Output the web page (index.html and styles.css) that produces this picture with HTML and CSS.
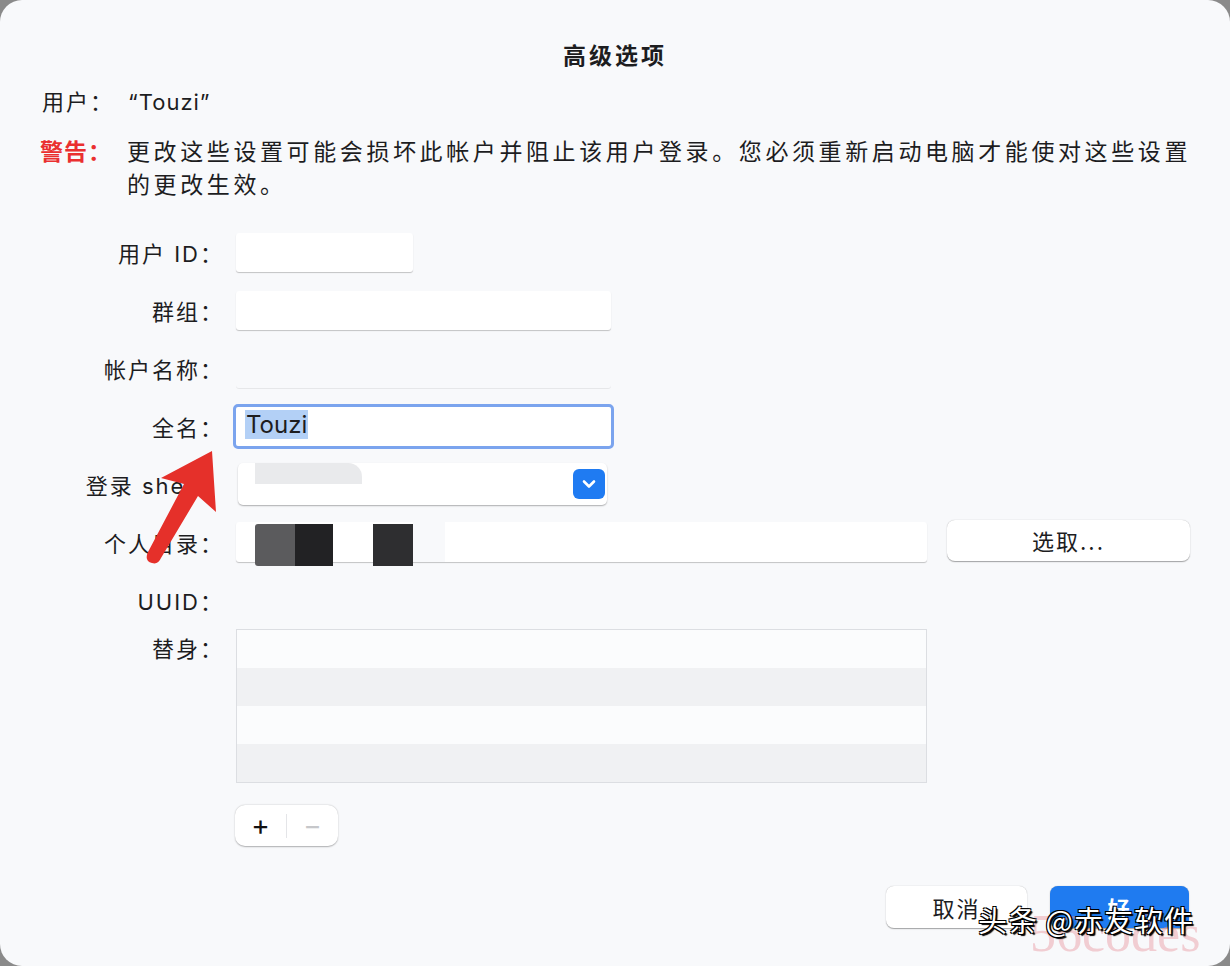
FILE: index.html
```html
<!DOCTYPE html>
<html lang="zh-CN">
<head>
  <meta charset="UTF-8" />
  <meta name="viewport" content="width=device-width, initial-scale=1" />
  <title>高级选项</title>
  <link rel="stylesheet" href="styles.css">
</head>
<body>
  <div class="dialog">
    <h1 class="title">高级选项</h1>
    <p class="user">用户：<span class="user-name">“Touzi”</span></p>
    <div class="warning">
      <span class="warn-label">警告：</span>
      <p class="warn-text">更改这些设置可能会损坏此帐户并阻止该用户登录。您必须重新启动电脑才能使对这些设置的更改生效。</p>
    </div>

    <div class="form">
      <div class="row">
        <label>用户 ID：</label>
        <div class="field field-short"></div>
      </div>
      <div class="row">
        <label>群组：</label>
        <div class="field field-mid"></div>
      </div>
      <div class="row">
        <label>帐户名称：</label>
        <div class="field field-mid field-flat"></div>
      </div>
      <div class="row">
        <label>全名：</label>
        <div class="field field-focus"><span class="sel">Touzi</span></div>
      </div>
      <div class="row">
        <label>登录 shell：</label>
        <div class="popup">
          <span class="blur-bar"></span>
          <span class="chevron">
            <svg width="14" height="10" viewBox="0 0 14 10"><path d="M2 2.5 L7 7.5 L12 2.5" fill="none" stroke="#fff" stroke-width="2.6" stroke-linecap="round" stroke-linejoin="round"/></svg>
          </span>
        </div>
      </div>
      <div class="row">
        <label>个人目录：</label>
        <div class="field field-wide">
          <span class="mask m1"></span><span class="mask m2"></span><span class="gap"></span><span class="mask m3"></span><span class="gap2"></span>
        </div>
        <button class="btn choose">选取...</button>
      </div>
      <div class="row">
        <label>UUID：</label>
      </div>
      <div class="row row-top">
        <label>替身：</label>
        <div class="alias-list">
          <div class="alias-row"></div>
          <div class="alias-row odd"></div>
          <div class="alias-row"></div>
          <div class="alias-row odd"></div>
        </div>
      </div>
      <div class="row-tools">
        <div class="segmented">
          <span class="seg plus">+</span>
          <span class="seg-sep"></span>
          <span class="seg minus">−</span>
        </div>
      </div>
    </div>

    <div class="actions">
      <button class="btn cancel">取消</button>
      <button class="btn ok">好</button>
    </div>

    <svg class="arrow" width="84" height="125" viewBox="0 0 84 125">
      <path d="M78 1 L27 28 L50 34 L14 102 Q10 111 18 113 Q24 115 27 108 L64 46 L82 62 Z" fill="#e5302a"/>
    </svg>

    <div class="wm-logo">56codes</div>
    <div class="wm-text">头条 @赤友软件</div>
  </div>
</body>
</html>
```

FILE: styles.css
```css
html {
  background: #8a8a8a;
}
body {
  margin: 0;
  font-family: Inter, "Noto Sans CJK SC", sans-serif;
  color: #1d1d1f;
}
.dialog {
  position: relative;
  width: 1230px;
  height: 966px;
  box-sizing: border-box;
  background: #f8f9fb;
  border-radius: 22px;
  padding: 36px 40px 0 40px;
  overflow: hidden;
}
.title {
  margin: 0;
  text-align: center;
  font-size: 23px;
  font-weight: 700;
  letter-spacing: 3px;
  line-height: 40px;
}
.user {
  margin: 10px 0 0 2px;
  font-size: 22px;
  line-height: 32px;
  letter-spacing: 2px;
}
.user-name {
  margin-left: 14px;
  letter-spacing: 1px;
}
.warning {
  display: flex;
  margin-top: 18px;
  margin-right: -20px;
  font-size: 23px;
  line-height: 33px;
}
.warn-label {
  flex: none;
  width: 87px;
  color: #ea2f2f;
  font-weight: 700;
  letter-spacing: 1px;
}
.warn-text {
  margin: 0;
  letter-spacing: 3.6px;
}
.form {
  margin-top: 21px;
  margin-left: -40px;
}
.row {
  display: flex;
  align-items: center;
  height: 58px;
}
.row label {
  flex: none;
  width: 224px;
  text-align: right;
  font-size: 22px;
  letter-spacing: 2px;
  margin-right: 12px;
}
.row-top {
  align-items: flex-start;
  height: auto;
}
.row-top label {
  margin-top: 2px;
}
.field {
  box-sizing: border-box;
  height: 39px;
  background: #fff;
  border-radius: 3px;
  box-shadow: 0 1px 1px rgba(0, 0, 0, 0.22);
}
.field-short {
  width: 177px;
}
.field-mid {
  width: 375px;
}
.field-flat {
  background: transparent;
  box-shadow: 0 1px 0 rgba(0, 0, 0, 0.07);
}
.field-focus {
  width: 381px;
  height: 45px;
  margin-left: -3px;
  border: 3px solid #7ba4ee;
  border-radius: 5px;
  box-shadow: none;
  padding: 3px 0 0 9px;
  font-size: 24px;
  line-height: 30px;
}
.sel {
  background: #b3d0f6;
  padding: 0 1px;
}
.popup {
  position: relative;
  box-sizing: border-box;
  width: 369px;
  height: 42px;
  margin-left: 2px;
  background: #fff;
  border-radius: 5px;
  box-shadow: 0 1px 1.5px rgba(0, 0, 0, 0.3);
  display: flex;
  align-items: center;
  justify-content: flex-end;
  padding-right: 2px;
}
.blur-bar {
  position: absolute;
  left: 17px;
  top: 0;
  width: 107px;
  height: 21px;
  background: #e9eaec;
  border-radius: 0 14px 0 0;
}
.chevron {
  width: 32px;
  height: 30px;
  border-radius: 6px;
  background: #1f7bf2;
  display: flex;
  align-items: center;
  justify-content: center;
}
.field-wide {
  width: 691px;
  height: 40px;
  display: flex;
  align-items: stretch;
  padding-left: 19px;
}
.mask {
  height: 42px;
  margin-top: 2px;
}
.m1 {
  width: 40px;
  background: #5b5b5d;
  border-radius: 3px 0 0 3px;
}
.m2 {
  width: 38px;
  background: #222224;
}
.gap {
  width: 40px;
  background: #fff;
}
.m3 {
  width: 40px;
  background: #2e2e30;
}
.gap2 {
  width: 32px;
  background: #f8f9fb;
}
.btn {
  font-family: Inter, "Noto Sans CJK SC", sans-serif;
  font-size: 22px;
  color: #1d1d1f;
  border: none;
  background: #fff;
  border-radius: 8px;
  box-shadow: 0 0.5px 1px rgba(0, 0, 0, 0.3), 0 1px 2px rgba(0, 0, 0, 0.08);
  letter-spacing: 2px;
}
.choose {
  width: 243px;
  height: 41px;
  margin-left: 20px;
  margin-top: -4px;
}
.alias-list {
  width: 691px;
  border: 1px solid #dcdee2;
  box-sizing: border-box;
}
.alias-row {
  height: 38px;
  background: #fbfcfd;
}
.alias-row.odd {
  background: #f0f1f3;
}
.row-tools {
  padding: 22px 0 0 235px;
}
.segmented {
  display: flex;
  align-items: center;
  width: 103px;
  height: 41px;
  background: #fff;
  border-radius: 10px;
  box-shadow: 0 0.5px 1.5px rgba(0, 0, 0, 0.3);
}
.seg {
  width: 51px;
  text-align: center;
  font-size: 28px;
  line-height: 41px;
}
.plus {
  color: #111;
}
.minus {
  color: #c6c7ca;
}
.seg-sep {
  width: 1px;
  height: 24px;
  background: #e4e5e8;
}
.actions {
  display: flex;
  justify-content: flex-end;
  gap: 23px;
  padding: 40px 1px 0 0;
}
.cancel {
  width: 141px;
  height: 42px;
}
.ok {
  width: 139px;
  height: 42px;
  background: #1f7bf0;
  color: #fff;
  font-weight: 700;
}
.arrow {
  position: absolute;
  left: 134px;
  top: 450px;
}
.wm-text {
  position: absolute;
  left: 978px;
  top: 898px;
  font-family: "Noto Sans CJK SC", sans-serif;
  font-size: 29px;
  color: #fff;
  letter-spacing: 1px;
  text-shadow: 1px 1px 0 #000, -1px -1px 0 #000, 1px -1px 0 #000, -1px 1px 0 #000, 2px 2px 1px #000;
}
.wm-logo {
  position: absolute;
  left: 1030px;
  top: 904px;
  font-family: "Liberation Serif", serif;
  font-size: 52px;
  line-height: 60px;
  color: rgba(232, 150, 160, 0.45);
}
```
